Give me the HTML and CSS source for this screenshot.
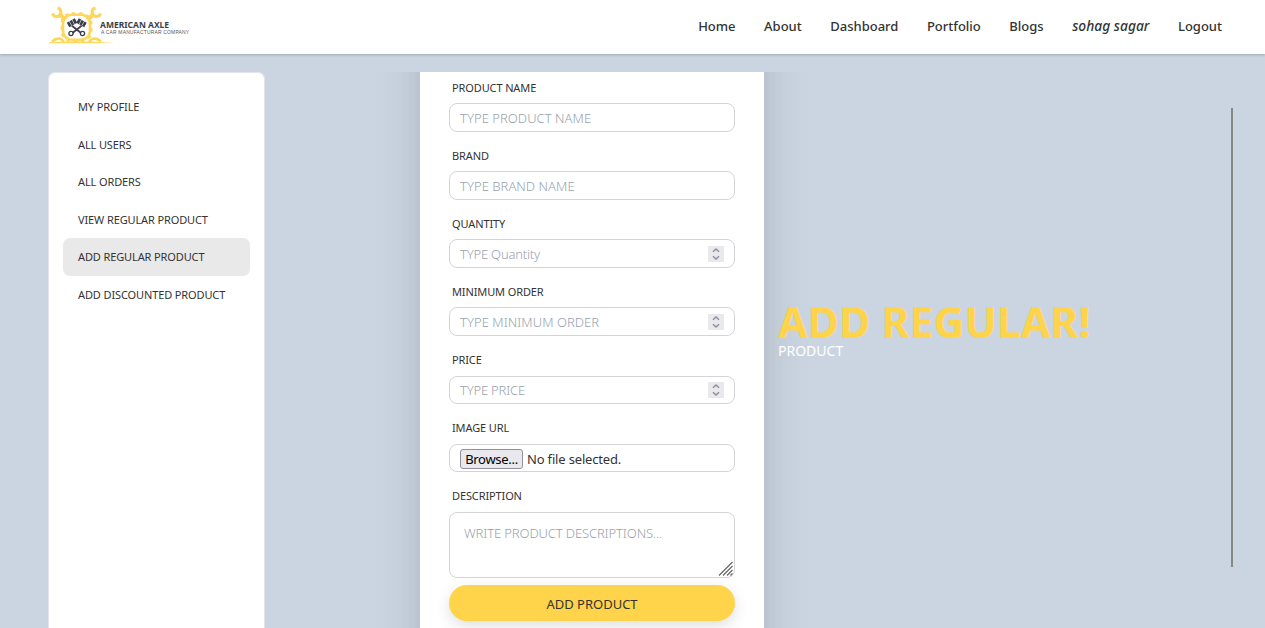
FILE: index.html
```html
<!DOCTYPE html>
<html lang="en">
<head>
<meta charset="utf-8">
<title>American Axle</title>
<link rel="stylesheet" href="styles.css">
</head>
<body>
<header class="navbar">
  <a class="brand">
    <svg class="brand-icon" width="66" height="38" viewBox="0 0 66 38">
      <g fill="none" stroke="#fed65c">
        <path d="M8.500 2A4.300 4.300 0 1 1 3.500 7.500M46.500 2A4.300 4.300 0 1 0 51.500 7.500" stroke-width="3"/>
        <path d="M11.500 9l5 5M43.500 9l-5 5" stroke-width="4"/>
        <rect x="14" y="8.800" width="27" height="25" rx="9" stroke-width="2.600"/>
        <rect x="12.700" y="7.500" width="29.600" height="27.600" rx="10" stroke-width="2.400" stroke-dasharray="3.500 4"/>
        <path d="M3 35.500q4-4 9-2.500l3 3M52 35.500q-4-4-9-2.500l-3 3" stroke-width="2.600"/>
      </g>
      <path d="M0 36.200Q30 34.500 66 37L0 37.200z" fill="#fed65c"/>
      <g fill="none" stroke="#3d3f4b">
        <path d="M19 19l8-4.500M36.500 19l-8-4.500" stroke-width="5"/>
        <path d="M22 19l10 8M33.500 19l-10 8" stroke-width="1.700"/>
        <circle cx="22" cy="27.500" r="2.100" stroke-width="1.300"/>
        <circle cx="33.500" cy="27.500" r="2.100" stroke-width="1.300"/>
      </g>
      <path d="M20 15l3 5M23 13.500l2.500 5M32.500 13.500l-2.500 5M35.500 15l-3 5" stroke="#dfe0e3" stroke-width=".7"/>
    </svg>
    <span class="brand-text"><b class="brand-name">AMERICAN AXLE</b><span class="brand-tag">A CAR MANUFACTURAR COMPANY</span></span>
  </a>
  <nav class="menu">
    <a>Home</a><a>About</a><a>Dashboard</a><a>Portfolio</a><a>Blogs</a><a class="user">sohag sagar</a><a>Logout</a>
  </nav>
</header>
<main class="layout">
  <aside class="sidebar">
    <a>MY PROFILE</a>
    <a>ALL USERS</a>
    <a>ALL ORDERS</a>
    <a>VIEW REGULAR PRODUCT</a>
    <a class="active">ADD REGULAR PRODUCT</a>
    <a>ADD DISCOUNTED PRODUCT</a>
  </aside>
  <section class="content">
    <form class="card">
      <div class="field"><label>PRODUCT NAME</label><div class="input"><span class="ph">TYPE PRODUCT NAME</span></div></div>
      <div class="field"><label>BRAND</label><div class="input"><span class="ph">TYPE BRAND NAME</span></div></div>
      <div class="field"><label>QUANTITY</label><div class="input"><span class="ph mixed">TYPE Quantity</span><svg class="spin" width="16" height="16" viewBox="0 0 16 16"><path d="M5 5.800L8 3l3 2.800M5 10.200L8 13l3-2.800"/></svg></div></div>
      <div class="field"><label>MINIMUM ORDER</label><div class="input"><span class="ph">TYPE MINIMUM ORDER</span><svg class="spin" width="16" height="16" viewBox="0 0 16 16"><path d="M5 5.800L8 3l3 2.800M5 10.200L8 13l3-2.800"/></svg></div></div>
      <div class="field"><label>PRICE</label><div class="input short"><span class="ph mixed">TYPE PRICE</span><svg class="spin" width="16" height="16" viewBox="0 0 16 16"><path d="M5 5.800L8 3l3 2.800M5 10.200L8 13l3-2.800"/></svg></div></div>
      <div class="field"><label>IMAGE URL</label><div class="input short file"><span class="browse">Browse...</span><span class="nofile">No file selected.</span></div></div>
      <div class="field last"><label>DESCRIPTION</label><div class="area"><span class="ph long">WRITE PRODUCT DESCRIPTIONS...</span><svg class="grip" width="15" height="15" viewBox="0 0 15 15"><path d="M1 14.500L14.500 1M5 14.500L14.500 5M9 14.500L14.500 9M12.500 14.500l2-2"/></svg></div></div>
      <div class="submit">ADD PRODUCT</div>
    </form>
    <div class="hero"><h1>ADD REGULAR!</h1><p>PRODUCT</p></div>
    <div class="divider"></div>
  </section>
</main>
</body>
</html>
```
FILE: styles.css
```css
* { box-sizing: border-box; }
body {
  margin: 0;
  height: 628px;
  overflow: hidden;
  background: #cbd5e1;
  color: #333;
  font-family: "Noto Sans", sans-serif;
  display: flex;
  flex-direction: column;
}
.navbar {
  height: 54px;
  flex: none;
  background: #fff;
  box-shadow: 0 1px 3px rgba(0,0,0,.14), 0 1px 2px rgba(0,0,0,.08);
  display: flex;
  justify-content: space-between;
  padding: 0 43px 0 49px;
}
.brand { display: flex; padding-top: 6px; }
.brand-text { display: flex; flex-direction: column; margin-left: -15px; padding-top: 13px; white-space: nowrap; }
.brand-name { font-size: 8.500px; line-height: 11px; color: #3d3f4b; }
.brand-tag { font: 4.900px/5px "Liberation Sans", sans-serif; color: #555; padding-left: 1px; letter-spacing: .22px; }
.menu { display: flex; gap: 28.500px; font-size: 13px; font-weight: 500; line-height: 20px; padding-top: 16px; white-space: nowrap; }
.user { font-style: italic; font-size: 13.800px; }
.layout { flex: 1; display: flex; padding: 18px 0 0 48px; min-height: 0; }
.sidebar {
  width: 217px;
  flex: none;
  background: #fff;
  border: 1px solid #e2e6ec;
  border-bottom: 0;
  border-radius: 7px 7px 0 0;
  padding: 15px 14px;
}
.sidebar a {
  display: block;
  height: 37.500px;
  padding: 0 15px;
  border-radius: 7px;
  font-size: 11px;
  line-height: 37.500px;
  letter-spacing: -.12px;
  white-space: nowrap;
}
.sidebar .active { background: #e9e9e9; }
.content { flex: 1; display: flex; overflow: hidden; padding-left: 98px; }
.card {
  width: 344px;
  height: 740px;
  flex: none;
  margin-top: -100px;
  padding: 108px 29px 0;
  background: #fff;
  box-shadow: 0 25px 50px -12px rgba(0,0,0,.25);
  margin-left: 57px;
}
.field { height: 68px; }
label { display: block; height: 23px; padding-left: 3px; font-size: 11px; line-height: 16px; letter-spacing: -.12px; }
.input {
  height: 29px;
  border: 1px solid #d3d4d6;
  border-radius: 8px;
  padding: 0 10px;
  display: flex;
  align-items: center;
  justify-content: space-between;
}
.short { height: 28px; margin-top: 1px; }
.ph { font-size: 13px; line-height: 18px; color: #989fae; font-weight: 300; letter-spacing: .04px; }
.mixed { letter-spacing: -.2px; }
.long { letter-spacing: -.12px; }
.spin { background: #e9e9ed; fill: none; stroke: #8f8f9d; stroke-width: 1.500; }
.file { justify-content: flex-start; gap: 4px; font-size: 13px; padding-top: 1px; }
.browse { width: 63px; height: 20px; border: 1px solid #8f8f9d; border-radius: 3px; background: #e9e9ed; color: #000; line-height: 18px; text-align: center; letter-spacing: -.3px; }
.nofile { letter-spacing: -.17px; }
.last { height: 97px; }
.area { position: relative; height: 66px; margin-top: 1px; border: 1px solid #d3d4d6; border-radius: 8px; padding: 8px 14px; }
.grip { position: absolute; right: 1px; bottom: 1px; fill: none; stroke: #666; stroke-width: 1.200; }
.submit { height: 36px; border-radius: 18px; background: #ffd44b; text-align: center; font-size: 13px; line-height: 38px; box-shadow: 0 5px 15px rgba(0,0,0,.13); }
.hero { width: 440px; padding: 228px 0 0 14px; white-space: nowrap; }
.hero h1 { margin: 0; font-size: 42.800px; line-height: 43px; color: #ffd44b; }
.hero p { margin: 1px 0 0; font-size: 14px; line-height: 14px; color: #fff; }
.divider { width: 2px; height: 459px; margin: 36px 0 0 27px; background: #858789; }
```
